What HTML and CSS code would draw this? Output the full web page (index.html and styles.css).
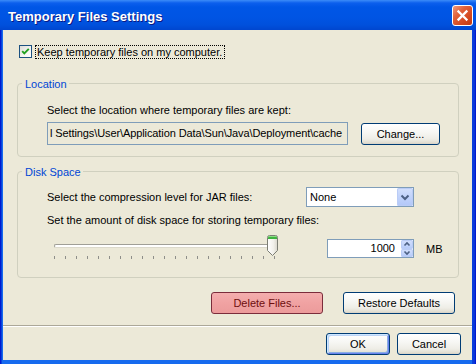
FILE: index.html
```html
<!DOCTYPE html>
<html>
<head>
<meta charset="utf-8">
<title>Temporary Files Settings</title>
<link rel="stylesheet" href="styles.css">
</head>
<body>
<div class="window">
  <div class="titlebar">
    <span class="title">Temporary Files Settings</span>
    <span class="close"><svg width="19" height="19" viewBox="0 0 19 19"><path d="M5.5 5.5 L13.5 13.5 M13.5 5.5 L5.5 13.5" stroke="#fff" stroke-width="2.3" stroke-linecap="square"/></svg></span>
  </div>
  <div class="client">
    <div class="check-row">
      <span class="checkbox"><svg width="11" height="11" viewBox="0 0 11 11"><path d="M2.2 5.2 L4.3 7.4 L8.8 2.8" fill="none" stroke="#21A121" stroke-width="1.9"/></svg></span>
      <span class="check-label">Keep temporary files on my computer.</span>
    </div>

    <div class="group location">
      <span class="legend">Location</span>
      <div class="text">Select the location where temporary files are kept:</div>
      <div class="loc-row">
        <div class="field"><span class="field-text">l Settings\User\Application Data\Sun\Java\Deployment\cache</span></div>
        <button class="btn change">Change...</button>
      </div>
    </div>

    <div class="group disk">
      <span class="legend">Disk Space</span>
      <div class="row1">
        <span class="lbl">Select the compression level for JAR files:</span>
        <div class="combo">
          <span class="combo-text">None</span>
          <span class="drop"><svg width="16" height="18" viewBox="0 0 16 18"><path d="M4.5 7.5 L8 11 L11.5 7.5" fill="none" stroke="#4D6185" stroke-width="2"/></svg></span>
        </div>
      </div>
      <div class="text t2">Set the amount of disk space for storing temporary files:</div>
      <div class="row3">
        <div class="slider">
          <div class="track"></div>
          <div class="ticks">
            <i></i><i></i><i></i><i></i><i></i><i></i><i></i><i></i><i></i><i></i><i></i><i></i><i></i><i></i><i></i><i></i><i></i><i></i><i></i><i></i><i></i>
          </div>
          <svg class="thumb" width="11" height="21" viewBox="0 0 11 21">
            <defs>
              <linearGradient id="tb" x1="0" y1="0" x2="1" y2="0">
                <stop offset="0" stop-color="#FFFFFF"/>
                <stop offset="0.6" stop-color="#F1F0EA"/>
                <stop offset="1" stop-color="#D8D6CB"/>
              </linearGradient>
            </defs>
            <path d="M0.5 2.5 Q0.5 0.5 2.5 0.5 H8.5 Q10.5 0.5 10.5 2.5 V15.5 L5.5 20.5 L0.5 15.5 Z" fill="url(#tb)" stroke="#7C7E74"/>
            <path d="M1 2.5 Q1 1 2.5 1 H8.5 Q10 1 10 2.5 V4 H1 Z" fill="#3FB33F"/>
            <path d="M1.5 1.5 H9.5" stroke="#8BDB84" stroke-width="1"/>
          </svg>
        </div>
        <div class="spinner">
          <span class="val">1000</span>
          <span class="spin">
            <span class="sbtn"><svg width="12" height="8" viewBox="0 0 12 8"><path d="M3.5 5.5 L6 3 L8.5 5.5" fill="none" stroke="#4D6185" stroke-width="1.6"/></svg></span>
            <span class="sbtn"><svg width="12" height="8" viewBox="0 0 12 8"><path d="M3.5 2.5 L6 5 L8.5 2.5" fill="none" stroke="#4D6185" stroke-width="1.6"/></svg></span>
          </span>
        </div>
        <span class="mb">MB</span>
      </div>
    </div>

    <div class="actions">
      <button class="btn delete">Delete Files...</button>
      <button class="btn restore">Restore Defaults</button>
    </div>
    <div class="separator"></div>
    <div class="footer">
      <button class="btn ok">OK</button>
      <button class="btn cancel">Cancel</button>
    </div>
  </div>
</div>
</body>
</html>
```
FILE: styles.css
```css
html, body {
  margin: 0;
  padding: 0;
  background: #0831D9;
}

.window {
  width: 476px;
  height: 364px;
  display: flex;
  flex-direction: column;
  background: linear-gradient(to right, #0019CF 0, #0019CF 1px, #0842DB 1px, #0842DB 2px, #166AEE 2px, #166AEE calc(100% - 4px), #0842DB calc(100% - 4px), #0831D9 calc(100% - 1px), #0019CF calc(100% - 1px));
  font-family: "Liberation Sans", Arial, sans-serif;
  font-size: 11px;
  color: #000;
}

.titlebar {
  height: 30px;
  flex: none;
  display: flex;
  align-items: flex-start;
  background: linear-gradient(to bottom, #3C8CF8 0px, #0C5FED 3px, #0056E6 7px, #0054E3 18px, #0050DC 25px, #0046CF 30px);
}

.title {
  padding: 9px 0 0 8px;
  font-size: 13px;
  font-weight: bold;
  line-height: 16px;
  color: #fff;
  text-shadow: 1px 1px 0 #0A1883;
}

.close {
  margin: 5px 3px 0 auto;
  width: 19px;
  height: 19px;
  border: 1px solid #fff;
  border-radius: 3px;
  background: linear-gradient(135deg, #F09A7E 0%, #E0613A 35%, #D4481F 70%, #C23B12 100%);
  display: flex;
}

.client {
  flex: 1;
  margin: 0 4px 4px 3px;
  background: #ECE9D8;
  display: flex;
  flex-direction: column;
  padding-bottom: 5px;
}

.check-row {
  display: flex;
  align-items: flex-start;
  margin: 15px 0 0 16px;
}

.checkbox {
  width: 11px;
  height: 11px;
  border: 1px solid #1C5180;
  background: linear-gradient(135deg, #DCDCD7 0%, #F5F5F2 60%, #FFFFFF 100%);
  display: flex;
}

.check-label {
  margin-left: 3px;
  border: 1px dotted #000;
  padding: 0 2px 0 1px;
  line-height: 12px;
}

.group {
  position: relative;
  margin: 0 13px 0 14px;
  border: 1px solid #D0D0BF;
  border-radius: 4px;
  padding-left: 29px;
}

.legend {
  position: absolute;
  top: -6px;
  left: 4px;
  padding: 0 2px 0 3px;
  background: #ECE9D8;
  color: #0046D5;
  line-height: 13px;
}

.text {
  line-height: 13px;
}

.location {
  margin-top: 24px;
  padding-top: 20px;
  padding-bottom: 11px;
}

.loc-row {
  display: flex;
  align-items: flex-start;
  margin-top: 5px;
}

.field {
  width: 297px;
  height: 21px;
  border: 1px solid #7F9DB9;
  padding: 0 0 0 2px;
  overflow: hidden;
  display: flex;
  align-items: center;
}

.field-text {
  flex: none;
  white-space: nowrap;
  line-height: 13px;
  letter-spacing: -0.1px;
}

.btn {
  height: 22px;
  border: 1px solid #003C74;
  border-radius: 3px;
  background: linear-gradient(to bottom, #FFFFFF 0%, #F7F7F4 40%, #EEEDE6 75%, #E2DFD3 92%, #D6D0C5 100%);
  font-family: "Liberation Sans", Arial, sans-serif;
  font-size: 11px;
  color: #000;
  padding: 0;
  margin: 0;
  line-height: 13px;
}

.change {
  width: 79px;
  margin: 1px 0 0 13px;
}

.disk {
  margin-top: 14px;
  padding-top: 15px;
  padding-bottom: 16px;
}

.row1 {
  display: flex;
  align-items: center;
  height: 20px;
}

.lbl {
  width: 259px;
  flex: none;
  line-height: 13px;
}

.combo {
  width: 106px;
  height: 18px;
  border: 1px solid #7F9DB9;
  background: #fff;
  display: flex;
  align-items: center;
}

.combo-text {
  flex: 1;
  padding-left: 3px;
  line-height: 13px;
}

.drop {
  width: 16px;
  height: 18px;
  border-radius: 2px;
  background: linear-gradient(to bottom, #D4E0FC 0%, #C1D3FB 50%, #B2C7F8 100%);
  box-shadow: inset 0 0 0 1px #BACCF6;
  display: flex;
}

.t2 {
  margin-top: 7px;
}

.row3 {
  display: flex;
  align-items: flex-start;
  margin-top: 8px;
  height: 26px;
}

.slider {
  position: relative;
  width: 280px;
  height: 26px;
  flex: none;
}

.track {
  position: absolute;
  left: 7px;
  top: 9px;
  width: 218px;
  height: 2px;
  background: #fff;
  border-top: 1px solid #A09F97;
  border-bottom: 1px solid #DCD9CB;
  border-left: 1px solid #A09F97;
  border-radius: 2px 0 0 2px;
}

.ticks {
  position: absolute;
  left: 7px;
  top: 21px;
  display: flex;
  gap: 10px;
}

.ticks i {
  display: block;
  width: 1px;
  height: 3px;
  background: #8E8E8A;
}

.thumb {
  position: absolute;
  left: 220px;
  top: 0;
}

.spinner {
  width: 85px;
  height: 17px;
  margin-top: 4px;
  border: 1px solid #7F9DB9;
  background: #fff;
  display: flex;
}

.val {
  flex: 1;
  text-align: right;
  padding-right: 6px;
  line-height: 17px;
}

.spin {
  width: 12px;
  display: flex;
  flex-direction: column;
}

.sbtn {
  flex: 1;
  border-radius: 2px;
  background: linear-gradient(to bottom, #D4E0FC 0%, #C1D3FB 60%, #B2C7F8 100%);
  box-shadow: inset 0 0 0 1px #BACCF6;
  display: flex;
  overflow: hidden;
}

.mb {
  margin: 8px 0 0 12px;
  line-height: 13px;
}

.actions {
  display: flex;
  justify-content: flex-end;
  gap: 20px;
  margin-top: 14px;
  padding-right: 17px;
}

.delete {
  width: 112px;
  border-color: #7B2C3B;
  background: linear-gradient(to bottom, #F4AEAE 0%, #F0A2A2 50%, #EC9B9B 100%);
  color: #6E0E0E;
}

.restore {
  width: 112px;
}

.separator {
  margin-top: 11px;
  height: 1px;
  border-top: 1px solid #ACA899;
  background: #fff;
}

.footer {
  display: flex;
  justify-content: flex-end;
  gap: 7px;
  margin-top: 6px;
  padding-right: 11px;
}

.ok, .cancel {
  width: 64px;
}

.ok {
  box-shadow: inset 1px 1px 0 #CEE7FF, inset -1px -1px 0 #6982EE, inset 2px 2px 0 #BCD4F6, inset -2px -2px 0 #89ADE4;
}
```
